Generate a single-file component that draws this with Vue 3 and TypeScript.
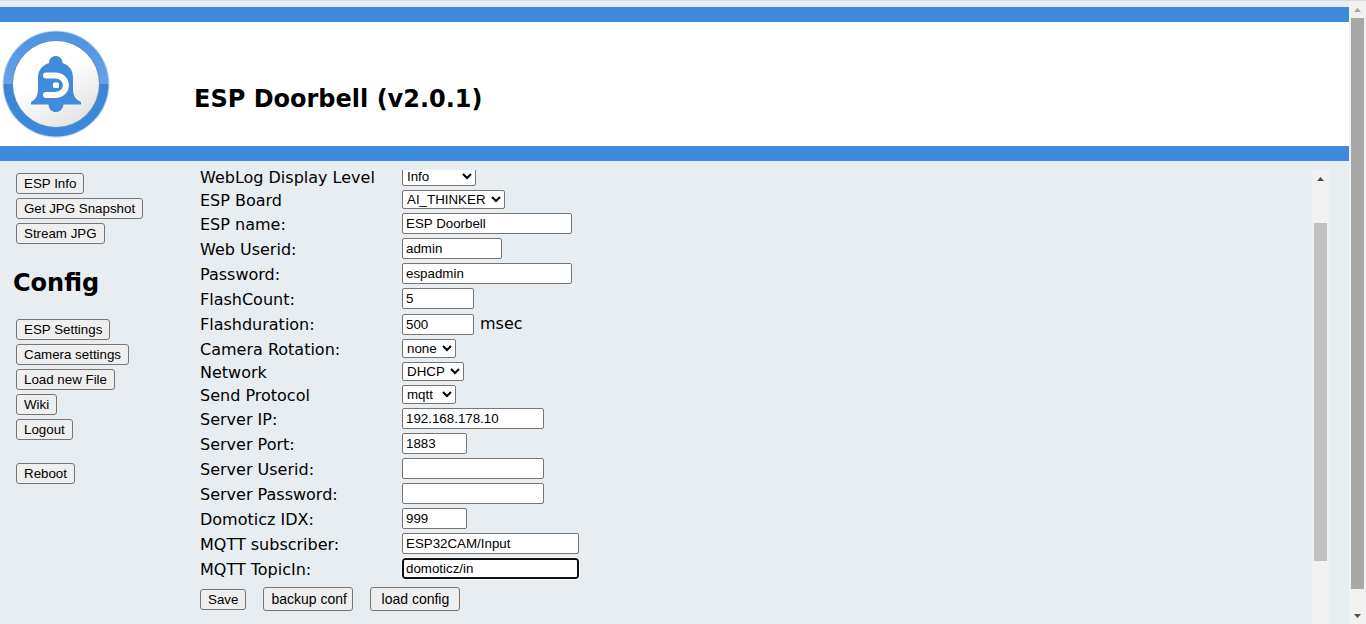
<script setup lang="ts">
import { reactive } from 'vue'

interface Field {
  id: string
  label: string
  kind: 'text' | 'select'
  size: string
  value: string
  options?: string[]
  suffix?: string
  active?: boolean
}

const actions: string[] = ['ESP Info', 'Get JPG Snapshot', 'Stream JPG']
const configLinks: string[] = ['ESP Settings', 'Camera settings', 'Load new File', 'Wiki', 'Logout']

const fields = reactive<Field[]>([
  { id: 'weblog', label: 'WebLog Display Level', kind: 'select', size: 's-74', value: 'Info', options: ['Info', 'Debug'] },
  { id: 'board', label: 'ESP Board', kind: 'select', size: 's-103', value: 'AI_THINKER', options: ['AI_THINKER'] },
  { id: 'name', label: 'ESP name:', kind: 'text', size: 's-170', value: 'ESP Doorbell' },
  { id: 'webuser', label: 'Web Userid:', kind: 'text', size: 's-100', value: 'admin' },
  { id: 'webpass', label: 'Password:', kind: 'text', size: 's-170', value: 'espadmin' },
  { id: 'flashcount', label: 'FlashCount:', kind: 'text', size: 's-72', value: '5' },
  { id: 'flashduration', label: 'Flashduration:', kind: 'text', size: 's-72', value: '500', suffix: 'msec' },
  { id: 'rotation', label: 'Camera Rotation:', kind: 'select', size: 's-54', value: 'none', options: ['none', '180'] },
  { id: 'network', label: 'Network', kind: 'select', size: 's-62', value: 'DHCP', options: ['DHCP', 'Fixed'] },
  { id: 'protocol', label: 'Send Protocol', kind: 'select', size: 's-54', value: 'mqtt', options: ['mqtt', 'json'] },
  { id: 'ip', label: 'Server IP:', kind: 'text', size: 's-142', value: '192.168.178.10' },
  { id: 'port', label: 'Server Port:', kind: 'text', size: 's-65', value: '1883' },
  { id: 'user', label: 'Server Userid:', kind: 'text', size: 's-142', value: '' },
  { id: 'pass', label: 'Server Password:', kind: 'text', size: 's-142', value: '' },
  { id: 'idx', label: 'Domoticz IDX:', kind: 'text', size: 's-65', value: '999' },
  { id: 'subscriber', label: 'MQTT subscriber:', kind: 'text', size: 's-177', value: 'ESP32CAM/Input' },
  { id: 'topic', label: 'MQTT TopicIn:', kind: 'text', size: 's-177', value: 'domoticz/in', active: true },
])
</script>

<template>
  <div class="window">
    <div class="page">
      <header class="banner">
        <svg class="logo" viewBox="0 0 112 112" aria-label="Doorbell logo" role="img">
          <defs>
            <linearGradient id="face" x1="0.2" y1="0" x2="0.8" y2="1">
              <stop offset="0.4" stop-color="#ffffff" />
              <stop offset="1" stop-color="#e0e0e0" />
            </linearGradient>
            <linearGradient id="ring" x1="0" y1="0" x2="0" y2="1">
              <stop offset="0" stop-color="#4c93e0" />
              <stop offset="0.5" stop-color="#65a4e8" />
              <stop offset="0.5" stop-color="#3d86d6" />
              <stop offset="1" stop-color="#3d88dc" />
            </linearGradient>
          </defs>
          <circle cx="56" cy="56" r="53.5" fill="#c9d8e8" />
          <circle cx="56" cy="56" r="52.5" fill="url(#ring)" />
          <circle cx="56" cy="56" r="44" fill="#5c8fc8" />
          <circle cx="56" cy="56" r="43" fill="url(#face)" />
          <path
            d="M49 35C49 25.700 62.500 25.700 62.500 35C69.500 37 73 42.500 73 50V61C73 68 76 71.500 81 74V76.500H63.500C62.500 86.500 49 86.500 48.500 76.500H31V74C35.500 71.500 38 68 38 61V50C38 42.500 42 37 49 35Z"
            fill="#418bdc"
          />
          <path d="M46 47.500H55C69.500 47.500 69.500 67 55 67H46" fill="none" stroke="#fff" stroke-width="6" stroke-linecap="round" />
          <rect x="53" y="54.500" width="6" height="5.500" rx="1.500" fill="#fff" />
        </svg>
        <h1>ESP Doorbell (v2.0.1)</h1>
      </header>

      <div class="body">
        <nav class="sidebar">
          <div class="group">
            <button v-for="item in actions" :key="item" type="button">{{ item }}</button>
          </div>
          <h2>Config</h2>
          <div class="group">
            <button v-for="item in configLinks" :key="item" type="button">{{ item }}</button>
          </div>
          <div class="group reboot">
            <button type="button">Reboot</button>
          </div>
        </nav>

        <main class="panel">
          <form @submit.prevent>
            <div class="fields">
              <div v-for="field in fields" :key="field.id" class="row" :class="field.suffix ? 'with-suffix' : field.kind">
                <label :for="field.id">{{ field.label }}</label>
                <select v-if="field.kind === 'select'" :id="field.id" v-model="field.value" :class="field.size">
                  <option v-for="option in field.options" :key="option">{{ option }}</option>
                </select>
                <input v-else :id="field.id" v-model="field.value" type="text" :class="[field.size, { active: field.active }]" />
                <span v-if="field.suffix" class="suffix">{{ field.suffix }}</span>
              </div>
            </div>
            <div class="buttons">
              <button type="submit">Save</button>
              <button type="button" class="large">backup conf</button>
              <button type="button" class="large">load config</button>
            </div>
          </form>
        </main>

        <div class="track inner" aria-hidden="true">
          <svg class="arrow" viewBox="0 0 17 17"><path d="M5 11L8.500 7L12 11Z" fill="#505050" /></svg>
          <div class="before"></div>
          <div class="thumb"></div>
          <div class="after"></div>
        </div>
      </div>
    </div>

    <div class="track outer" aria-hidden="true">
      <svg class="arrow" viewBox="0 0 17 17"><path d="M5 11L8.500 7L12 11Z" fill="#a3a3a3" /></svg>
      <div class="thumb"></div>
      <div class="after"></div>
      <svg class="arrow" viewBox="0 0 17 17"><path d="M5 7L8.500 11L12 7Z" fill="#505050" /></svg>
    </div>
  </div>
</template>

<style>
body {
  margin: 0;
  background: #e8edf1;
}
</style>

<style scoped>
.window {
  box-sizing: border-box;
  display: flex;
  height: 100vh;
  overflow: hidden;
  border-top: 1px solid #dadce0;
  background: #e8edf1;
  color: #000;
  font-family: Verdana, "DejaVu Sans", sans-serif;
  font-size: 16px;
}
.page {
  display: flex;
  flex: 1;
  flex-direction: column;
  min-width: 0;
  padding-top: 6px;
}
.banner {
  display: flex;
  flex: none;
  align-items: center;
  gap: 82px;
  height: 124px;
  border-top: 15px solid #3f8adb;
  border-bottom: 15px solid #3f8adb;
  background: #fff;
}
.logo {
  width: 112px;
  height: 112px;
}
h1,
h2 {
  margin: 0;
  font-size: 24px;
  font-weight: bold;
  line-height: 30px;
}
h1 {
  padding-top: 30px;
}
.body {
  display: flex;
  flex: 1;
  min-height: 0;
  padding: 9px 20px 0 0;
}
.sidebar {
  box-sizing: border-box;
  flex: none;
  width: 200px;
  padding: 3px 13px;
}
.group {
  display: flex;
  flex-direction: column;
  align-items: flex-start;
  gap: 4px;
  padding-left: 3px;
}
.reboot {
  padding-top: 23px;
}
h2 {
  padding: 24px 0 21px;
}
button {
  box-sizing: border-box;
  height: 21px;
  padding: 0 7px;
  border: 1px solid #767676;
  border-radius: 3px;
  background: #efefef;
  color: #000;
  font-family: Arial, "Liberation Sans", sans-serif;
  white-space: nowrap;
}
.panel {
  flex: 1;
  min-width: 0;
  overflow: hidden;
}
/* The form is shown partly scrolled past its first row. */
.fields {
  display: flex;
  flex-direction: column;
  gap: 2px;
  margin-top: -4px;
}
.row {
  display: flex;
  align-items: center;
  height: 23px;
}
.row.select {
  height: 21px;
}
.row.with-suffix {
  height: 24px;
}
label {
  width: 202px;
  padding-top: 2px;
  line-height: 18px;
}
input,
select {
  box-sizing: border-box;
  margin: 0;
  border: 1px solid #767676;
  border-radius: 2px;
  background-color: #fff;
  color: #000;
  font-family: Arial, "Liberation Sans", sans-serif;
}
input {
  height: 21px;
  padding: 0 3px;
}
select {
  height: 19px;
  padding: 0;
}
input:focus,
input.active {
  padding: 0 2px;
  border: 2px solid #101010;
  border-radius: 3px;
  outline: 1px solid #fff;
}
.suffix {
  margin-left: 6px;
  line-height: 20px;
}
.s-54 { width: 54px; }
.s-62 { width: 62px; }
.s-65 { width: 65px; }
.s-72 { width: 72px; }
.s-74 { width: 74px; }
.s-100 { width: 100px; }
.s-103 { width: 103px; }
.s-142 { width: 142px; }
.s-170 { width: 170px; }
.s-177 { width: 177px; }
.buttons {
  display: flex;
  align-items: center;
  gap: 17px;
  padding-top: 7px;
}
.large {
  width: 90px;
  height: 24px;
  font-size: 14px;
}
.track {
  display: flex;
  flex: none;
  flex-direction: column;
  width: 17px;
  background: #f1f1f1;
}
.arrow {
  flex: none;
  width: 17px;
  height: 17px;
}
.thumb {
  margin: 0 2px;
}
.inner .before {
  flex: 36;
}
.inner .thumb {
  flex: 338;
  background: #c1c1c1;
}
.inner .after {
  flex: 63;
}
.outer .thumb {
  flex: 571;
  background: #a8a8a8;
}
.outer .after {
  flex: 18;
}
</style>
